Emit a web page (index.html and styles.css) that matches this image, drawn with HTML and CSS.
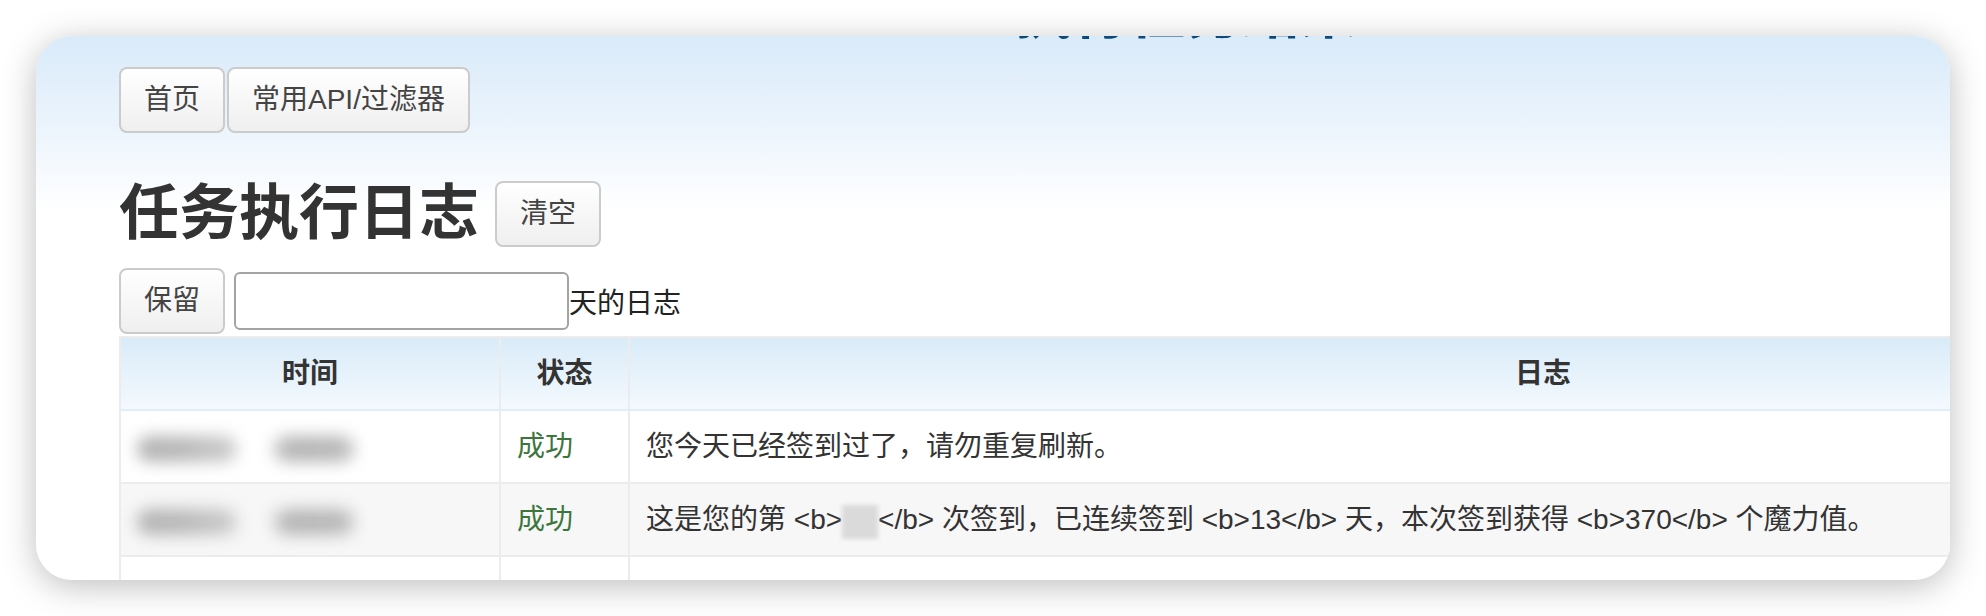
FILE: index.html
```html
<!DOCTYPE html>
<html lang="zh-CN">
<head>
<meta charset="utf-8">
<title>任务执行日志</title>
<link rel="stylesheet" href="styles.css">
</head>
<body>
<div class="stage">
  <div class="window">
    <div class="page">
      <div class="site-head">
        <h1 class="site-title">执行任务结果</h1>
      </div>
      <div class="nav">
        <button class="btn">首页</button>
        <button class="btn">常用API/过滤器</button>
      </div>
      <div class="title-row">
        <h2 class="page-title">任务执行日志</h2>
        <button class="btn">清空</button>
      </div>
      <div class="keep-row">
        <button class="btn">保留</button>
        <input class="days-input" type="text">
        <span class="keep-label">天的日志</span>
      </div>
      <table class="log-table">
        <colgroup>
          <col class="col-time">
          <col class="col-status">
          <col class="col-log">
        </colgroup>
        <thead>
          <tr><th>时间</th><th>状态</th><th>日志</th></tr>
        </thead>
        <tbody>
          <tr>
            <td><span class="blur-a"></span><span class="blur-b"></span></td>
            <td class="ok">成功</td>
            <td>您今天已经签到过了，请勿重复刷新。</td>
          </tr>
          <tr class="striped">
            <td><span class="blur-a"></span><span class="blur-b"></span></td>
            <td class="ok">成功</td>
            <td>这是您的第 &lt;b&gt;<span class="blur-num"></span>&lt;/b&gt; 次签到，已连续签到 &lt;b&gt;13&lt;/b&gt; 天，本次签到获得 &lt;b&gt;370&lt;/b&gt; 个魔力值。</td>
          </tr>
          <tr>
            <td>&nbsp;</td>
            <td>&nbsp;</td>
            <td>&nbsp;</td>
          </tr>
        </tbody>
      </table>
    </div>
  </div>
</div>
</body>
</html>
```
FILE: styles.css
```css
* { box-sizing: border-box; }
html, body { margin: 0; padding: 0; background: #fff; }
body {
  font-family: "Liberation Sans", "Noto Sans CJK SC", sans-serif;
  color: #333;
  overflow: hidden;
}
.stage { padding: 36px; height: 616px; }
.window {
  position: relative;
  height: 544px;
  border-radius: 36px;
  overflow: hidden;
  background: linear-gradient(#d9eaf9 0, #e9f3fc 80px, #ffffff 175px);
  box-shadow: 0 6px 34px rgba(0, 0, 0, 0.26);
}
.page { width: 2600px; padding-left: 83px; }
.site-head { height: 6px; overflow: hidden; }
.site-title {
  margin: -51px 0 0;
  padding-left: 896px;
  font-size: 57px;
  line-height: 57px;
  font-weight: bold;
  color: #0b4a7c;
}
.nav { margin-top: 25px; display: flex; gap: 2px; }
.btn {
  font-family: inherit;
  font-size: 28px;
  line-height: 40px;
  padding: 11px 23px;
  border: 2px solid #cbcbcb;
  border-radius: 8px;
  background: linear-gradient(#ffffff, #efefef);
  color: #444;
}
.title-row { display: flex; align-items: center; gap: 16px; margin-top: 48px; }
.page-title {
  margin: 0;
  font-size: 60px;
  line-height: 66px;
  font-weight: bold;
  color: #333;
}
.keep-row { display: flex; align-items: center; margin-top: 21px; }
.days-input {
  width: 335px;
  height: 58px;
  margin-left: 9px;
  border: 2px solid #a3a3a3;
  border-radius: 6px;
  background: #fff;
}
.keep-label { font-size: 28px; color: #222; }
.log-table {
  margin-top: 2px;
  width: 2339px;
  border-collapse: collapse;
  font-size: 28px;
  line-height: 39px;
}
.col-time { width: 380px; }
.col-status { width: 129px; }
.log-table th,
.log-table td {
  border: 2px solid #ececec;
  padding: 16px;
  text-align: left;
}
.log-table th {
  background: linear-gradient(#d9ebf8, #f4f9fe);
  border-bottom: 2px solid #e1eefa;
  font-weight: bold;
  text-align: center;
  color: #333;
}
.striped td { background: #f7f7f7; }
.ok { color: #3c763d; }
.blur-a,
.blur-b {
  display: inline-block;
  height: 26px;
  vertical-align: middle;
  border-radius: 13px;
  filter: blur(8px);
}
.blur-a { width: 100px; background: linear-gradient(90deg, #b3b3b3 0, #b8b8b8 45%, #cdcdcd 100%); }
.blur-b { width: 82px; margin-left: 36px; background: linear-gradient(90deg, #c9c9c9 0, #b5b5b5 25%, #b8b8b8 80%, #cbcbcb 100%); }
.blur-num {
  display: inline-block;
  width: 36px;
  height: 34px;
  vertical-align: middle;
  background: #dadada;
  filter: blur(2px);
}
```
